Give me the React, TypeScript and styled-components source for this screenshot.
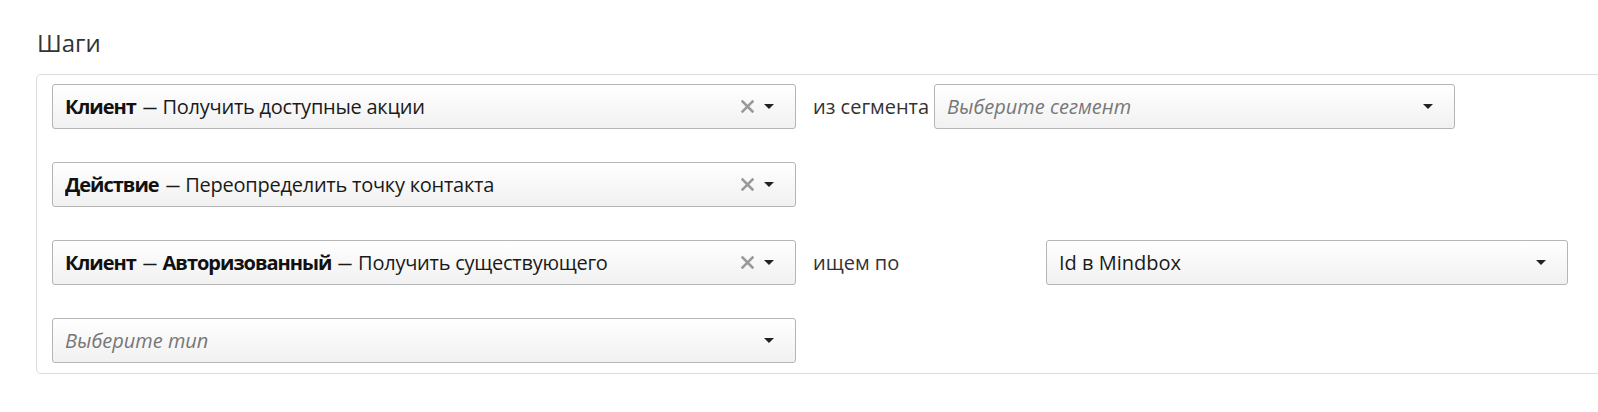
import React from "react";
import styled, { createGlobalStyle } from "styled-components";

const Global = createGlobalStyle`
  html, body { margin: 0; padding: 0; background: #fff; overflow: hidden; }
  body { font-family: "Open Sans", "Noto Sans", "Liberation Sans", sans-serif; color: #222; }
`;

const Page = styled.div`
  padding: 31px 0 0 36px;
`;

const Title = styled.h2`
  margin: 0 0 19px 1px;
  font-size: 24px;
  font-weight: 400;
  line-height: 24px;
  color: #333;
`;

const StepsBox = styled.div`
  border: 1px solid #dcdcdc;
  border-radius: 5px;
  margin-right: -20px;
  padding: 9px 15px 10px 15px;
  display: flex;
  flex-direction: column;
  gap: 33px;
`;

const Row = styled.div`
  display: flex;
  align-items: center;
  height: 45px;
`;

const Select = styled.div<{ $width: number }>`
  box-sizing: border-box;
  flex: none;
  width: ${(p) => p.$width}px;
  height: 45px;
  border: 1px solid #b5b5b5;
  border-radius: 3px;
  background: linear-gradient(#ffffff, #f1f1f1);
  display: flex;
  align-items: center;
  padding: 0 21px 0 12px;
  font-size: 20px;
  color: #1a1a1a;
`;

const Value = styled.span<{ $tight?: boolean }>`
  flex: 1;
  white-space: nowrap;
  overflow: hidden;
  letter-spacing: ${(p) => (p.$tight ? "-0.25px" : "0")};
`;

const Strong = styled.b`
  font-weight: 700;
  letter-spacing: -1px;
  color: #111;
`;

const Dash = styled.span`
  display: inline-block;
  transform: scaleX(0.72);
  margin: 0 -2px 0 -1px;
`;

const Placeholder = styled.span`
  flex: 1;
  font-style: italic;
  color: #777;
`;

const Clear = styled.span`
  margin-right: 10px;
  display: flex;
`;

const Arrow = styled.span`
  width: 0;
  height: 0;
  border-left: 5px solid transparent;
  border-right: 5px solid transparent;
  border-top: 5px solid #222;
`;

const Label = styled.span<{ $width: number }>`
  flex: none;
  width: ${(p) => p.$width}px;
  padding-left: 17px;
  box-sizing: border-box;
  font-size: 20px;
  color: #333;
  white-space: nowrap;
`;

const X = () => (
  <Clear>
    <svg width="13" height="13" viewBox="0 0 13 13">
      <path d="M1.5 1.5 L11.5 11.5 M11.5 1.5 L1.5 11.5" stroke="#999" strokeWidth="2.5" strokeLinecap="square" />
    </svg>
  </Clear>
);

const D = () => <Dash>—</Dash>;

export default function App() {
  return (
    <>
      <Global />
      <Page>
        <Title>Шаги</Title>
        <StepsBox>
          <Row>
            <Select $width={744}>
              <Value $tight>
                <Strong>Клиент</Strong> <D /> Получить доступные акции
              </Value>
              <X />
              <Arrow />
            </Select>
            <Label $width={138}>из сегмента</Label>
            <Select $width={521}>
              <Placeholder>Выберите сегмент</Placeholder>
              <Arrow />
            </Select>
          </Row>
          <Row>
            <Select $width={744}>
              <Value $tight>
                <Strong>Действие</Strong> <D /> Переопределить точку контакта
              </Value>
              <X />
              <Arrow />
            </Select>
          </Row>
          <Row>
            <Select $width={744}>
              <Value $tight>
                <Strong>Клиент</Strong> <D /> <Strong>Авторизованный</Strong> <D /> Получить существующего
              </Value>
              <X />
              <Arrow />
            </Select>
            <Label $width={250}>ищем по</Label>
            <Select $width={522}>
              <Value>Id в Mindbox</Value>
              <Arrow />
            </Select>
          </Row>
          <Row>
            <Select $width={744}>
              <Placeholder>Выберите тип</Placeholder>
              <Arrow />
            </Select>
          </Row>
        </StepsBox>
      </Page>
    </>
  );
}
